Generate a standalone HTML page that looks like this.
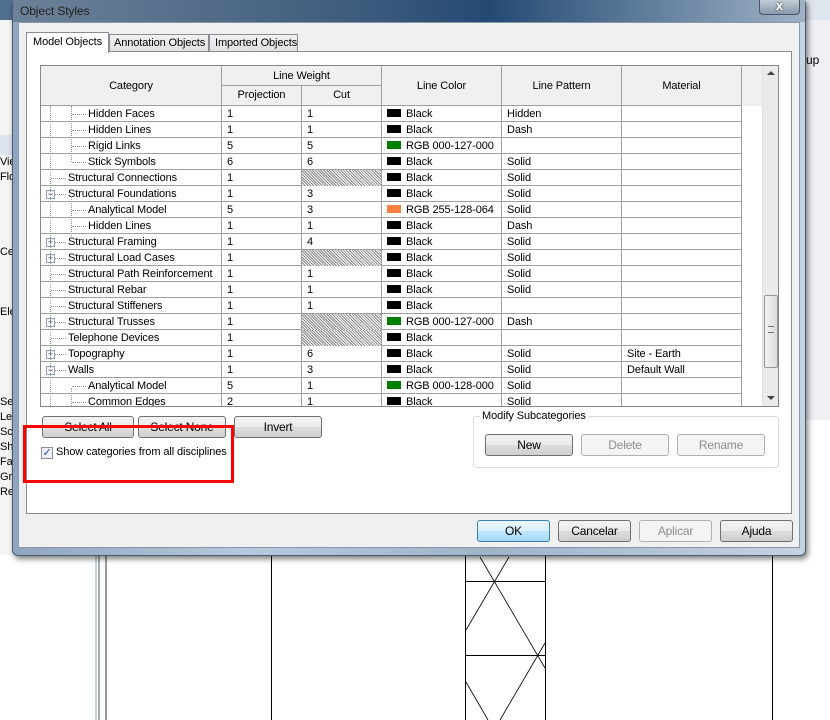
<!DOCTYPE html>
<html><head><meta charset="utf-8"><style>
*{margin:0;padding:0;box-sizing:border-box}
body{width:830px;height:720px;position:relative;overflow:hidden;background:#fff;font-family:"Liberation Sans",sans-serif;font-size:11px;letter-spacing:-0.1px;color:#000}
.a{position:absolute;white-space:nowrap}
.btn{position:absolute;height:22px;border:1px solid #707070;border-radius:3px;background:linear-gradient(#f2f2f2,#ebebeb 50%,#dddddd 51%,#cfcfcf);text-align:center;line-height:20px;font-size:12px;letter-spacing:-0.2px}
.dis{border-color:#adb2b5;color:#8d8d8d;background:#f4f4f4}
.row{position:absolute;left:0;height:16px;width:701px;border-bottom:1px solid #a0a0a0}
.c{position:absolute;top:0;height:16px;line-height:17px;padding-left:5px;border-right:1px solid #a0a0a0;white-space:nowrap;overflow:hidden}
.sw{display:inline-block;width:14px;height:8px;margin-right:5px;vertical-align:0}
.hatch{background:repeating-linear-gradient(45deg,#888 0 1px,#fff 1px 2px)}
.tv{position:absolute;border-left:1px dotted #999}
.th{position:absolute;border-top:1px dotted #999;width:14px}
.pm{position:absolute;width:9px;height:9px;border:1px solid #8a9bb8;background:#fff;font-size:9px;line-height:6px;text-align:center;color:#333}
</style></head><body>
<div class="a" style="left:0;top:0;width:830px;height:555px;background:#dfe5ec"></div>
<div class="a" style="left:0;top:0;width:14px;height:555px;background:#f4f4f4"></div>
<div class="a" style="left:0;top:0;width:14px;height:20px;background:#4f6f8f"></div>
<div class="a" style="left:0;top:135px;width:14px;height:20px;background:#dbe4ef"></div>
<div class="a" style="left:0;top:155px;font-size:11px;line-height:15px;width:14px;overflow:hidden;white-space:normal">Vie<br>Flo<br><br><br><br><br>Ce<br><br><br><br>Ele<br><br><br><br><br><br>Se<br>Leg<br>Sch<br>She<br>Fan<br>Gro<br>Re</div>
<div class="a" style="left:806px;top:20px;width:24px;height:400px;background:#eef0f3"></div>
<div class="a" style="left:806px;top:53px;font-size:12px">up</div>
<div class="a" style="left:806px;top:420px;width:24px;height:140px;background:#fff"></div>
<div class="a" style="left:0;top:555px;width:830px;height:165px;background:#fff"></div>
<svg class="a" style="left:0;top:540px" width="830" height="180">
<line x1="96" y1="0" x2="96" y2="180" stroke="#c8d4e2" stroke-width="2"/>
<line x1="99" y1="0" x2="99" y2="180" stroke="#555" stroke-width="1"/>
<line x1="106" y1="0" x2="106" y2="180" stroke="#333" stroke-width="1"/>
<line x1="271.5" y1="0" x2="271.5" y2="180" stroke="#000"/>
<line x1="465.5" y1="0" x2="465.5" y2="180" stroke="#000"/>
<line x1="545.5" y1="0" x2="545.5" y2="180" stroke="#000"/>
<line x1="772.5" y1="0" x2="772.5" y2="180" stroke="#000"/>
<line x1="465" y1="41.5" x2="545" y2="41.5" stroke="#000"/>
<line x1="465" y1="115.5" x2="545" y2="115.5" stroke="#000"/>
<line x1="480" y1="17" x2="545" y2="128" stroke="#000" stroke-width=".8"/>
<line x1="509" y1="17" x2="466" y2="90" stroke="#000" stroke-width=".8"/>
<line x1="545" y1="103" x2="500" y2="180" stroke="#000" stroke-width=".8"/>
<line x1="466" y1="142" x2="488" y2="180" stroke="#000" stroke-width=".8"/>
</svg>
<div class="a" style="left:12px;top:-2px;width:794px;height:558px;border:1px solid #4a5b70;border-radius:6px;background:linear-gradient(90deg,#8ea6bf,#b7c9dc 30%,#9fb3c8 60%,#c5d3e2);box-shadow:2px 3px 6px rgba(0,0,0,.5)"></div>
<div class="a" style="left:13px;top:0;width:792px;height:22px;background:linear-gradient(90deg,#6d8298,#3c5a7c 45%,#244a72 60%,#6f8aa6 85%,#9fb2c6)"></div>
<div class="a" style="left:20px;top:4px;font-size:12px;color:#222">Object Styles</div>
<div class="a" style="left:759px;top:-2px;width:41px;height:17px;border:1px solid #4a5565;border-radius:0 0 4px 4px;background:linear-gradient(#c7d0da,#8999ab);color:#fff;font-weight:bold;text-align:center;line-height:14px;font-size:13px;text-shadow:0 0 2px #333">x</div>
<div class="a" style="left:18px;top:22px;width:782px;height:526px;background:#f0f0f0;border:1px solid #8a99aa"></div>
<div class="a" style="left:26px;top:51px;width:766px;height:463px;border:1px solid #898c95;background:#fff"></div>
<div class="a" style="left:26px;top:32px;width:83px;height:21px;border:1px solid #898c95;border-bottom:none;background:#fff;line-height:19px;padding-left:6px">Model Objects</div>
<div class="a" style="left:109px;top:34px;width:100px;height:18px;border:1px solid #898c95;background:linear-gradient(#f2f2f2,#e0e0e0);line-height:17px;padding-left:4px">Annotation Objects</div>
<div class="a" style="left:209px;top:34px;width:89px;height:18px;border:1px solid #898c95;background:linear-gradient(#f2f2f2,#e0e0e0);line-height:17px;padding-left:5px">Imported Objects</div>
<div class="a" style="left:40px;top:65px;width:739px;height:342px;border:1px solid #828790;background:#fff;overflow:hidden">
 <div class="a" style="left:0;top:0;width:701px;height:40px;background:#f0f0f0;border-bottom:1px solid #a0a0a0"></div>
 <div class="a" style="left:0;top:0;width:181px;height:40px;border-right:1px solid #a0a0a0;text-align:center;line-height:40px">Category</div>
 <div class="a" style="left:181px;top:0;width:160px;height:20px;border-right:1px solid #a0a0a0;border-bottom:1px solid #a0a0a0;text-align:center;line-height:20px">Line Weight</div>
 <div class="a" style="left:181px;top:20px;width:80px;height:20px;border-right:1px solid #a0a0a0;text-align:center;line-height:19px">Projection</div>
 <div class="a" style="left:261px;top:20px;width:80px;height:20px;border-right:1px solid #a0a0a0;text-align:center;line-height:19px">Cut</div>
 <div class="a" style="left:341px;top:0;width:120px;height:40px;border-right:1px solid #a0a0a0;text-align:center;line-height:40px">Line Color</div>
 <div class="a" style="left:461px;top:0;width:120px;height:40px;border-right:1px solid #a0a0a0;text-align:center;line-height:40px">Line Pattern</div>
 <div class="a" style="left:581px;top:0;width:120px;height:40px;border-right:1px solid #a0a0a0;text-align:center;line-height:40px">Material</div>
 <div class="a" style="left:701px;top:0;width:20px;height:40px;background:#f0f0f0"></div>
 <div id="rows" class="a" style="left:0;top:40px;width:701px;height:300px"></div>
 <div class="tv" style="left:9px;top:40px;height:300px"></div>
 <div class="a" style="left:721px;top:0;width:17px;height:340px;background:#eaeaea;border-left:1px solid #e0e0e0"></div>
 <div class="a" style="left:726px;top:5px;width:0;height:0;border-left:4px solid transparent;border-right:4px solid transparent;border-bottom:4px solid #444"></div>
 <div class="a" style="left:726px;top:330px;width:0;height:0;border-left:4px solid transparent;border-right:4px solid transparent;border-top:4px solid #444"></div>
 <div class="a" style="left:723px;top:229px;width:14px;height:73px;border:1px solid #979797;border-radius:2px;background:linear-gradient(90deg,#f3f3f3,#dcdcdc)"></div>
 <div class="a" style="left:727px;top:260px;width:6px;height:7px;border-top:1px solid #777;border-bottom:1px solid #777"></div>
</div>
<div class="btn" style="left:42px;top:416px;width:92px">Select All</div>
<div class="btn" style="left:138px;top:416px;width:88px">Select None</div>
<div class="btn" style="left:234px;top:416px;width:88px">Invert</div>
<div class="a" style="left:41px;top:447px;width:12px;height:12px;border:1px solid #8f8f8f;background:#eef;color:#2a4a9a;font-size:11px;line-height:10px;text-align:center">✓</div>
<div class="a" style="left:56px;top:446px">Show categories from all disciplines</div>
<div class="a" style="left:23px;top:425px;width:211px;height:58px;border:3px solid #f00"></div>
<div class="a" style="left:473px;top:416px;width:306px;height:52px;border:1px solid #d5dfe5;border-radius:3px"></div>
<div class="a" style="left:480px;top:410px;background:#fff;padding:0 2px">Modify Subcategories</div>
<div class="btn" style="left:485px;top:434px;width:88px">New</div>
<div class="btn dis" style="left:581px;top:434px;width:88px">Delete</div>
<div class="btn dis" style="left:677px;top:434px;width:88px">Rename</div>
<div class="btn" style="left:477px;top:520px;width:73px;border-color:#3c7fb1;background:linear-gradient(#eaf6fd,#d9f0fc 50%,#bee6fd 51%,#a7d9f5)">OK</div>
<div class="btn" style="left:558px;top:520px;width:73px">Cancelar</div>
<div class="btn dis" style="left:639px;top:520px;width:73px">Aplicar</div>
<div class="btn" style="left:720px;top:520px;width:73px">Ajuda</div>
<script>
var R=[
[2,'Hidden Faces','1','1','#000','Black','Hidden','',0],
[2,'Hidden Lines','1','1','#000','Black','Dash','',0],
[2,'Rigid Links','5','5','#008000','RGB 000-127-000','','',0],
[2,'Stick Symbols','6','6','#000','Black','Solid','',0],
[1,'Structural Connections','1','H','#000','Black','Solid','',0],
[1,'Structural Foundations','1','3','#000','Black','Solid','','-'],
[2,'Analytical Model','5','3','#ff8040','RGB 255-128-064','Solid','',0],
[2,'Hidden Lines','1','1','#000','Black','Dash','',0],
[1,'Structural Framing','1','4','#000','Black','Solid','','+'],
[1,'Structural Load Cases','1','H','#000','Black','Solid','','+'],
[1,'Structural Path Reinforcement','1','1','#000','Black','Solid','',0],
[1,'Structural Rebar','1','1','#000','Black','Solid','',0],
[1,'Structural Stiffeners','1','1','#000','Black','','',0],
[1,'Structural Trusses','1','H','#008000','RGB 000-127-000','Dash','','+'],
[1,'Telephone Devices','1','H','#000','Black','','',0],
[1,'Topography','1','6','#000','Black','Solid','Site - Earth','+'],
[1,'Walls','1','3','#000','Black','Solid','Default Wall','-'],
[2,'Analytical Model','5','1','#008000','RGB 000-128-000','Solid','',0],
[2,'Common Edges','2','1','#000','Black','Solid','',0]];
var h='';
R.forEach(function(r,i){
 var y=i*16;
 var ind=r[0]==2?47:27;
 h+='<div class="row" style="top:'+y+'px">';
 h+='<div class="c" style="left:0;width:181px;padding-left:'+ind+'px">'+r[1]+'</div>';
 h+='<div class="c" style="left:181px;width:80px">'+r[2]+'</div>';
 h+=r[3]=='H'?'<div class="c hatch" style="left:261px;width:80px"></div>':'<div class="c" style="left:261px;width:80px">'+r[3]+'</div>';
 h+='<div class="c" style="left:341px;width:120px"><span class="sw" style="background:'+r[4]+'"></span>'+r[5]+'</div>';
 h+='<div class="c" style="left:461px;width:120px">'+r[6]+'</div>';
 h+='<div class="c" style="left:581px;width:120px">'+r[7]+'</div>';
 h+='</div>';
 if(r[0]==2){h+='<div class="th" style="left:31px;top:'+(y+8)+'px;width:14px"></div>';}
 else{h+='<div class="th" style="left:10px;top:'+(y+8)+'px;width:15px"></div>';}
 if(r[8])h+='<div class="pm" style="left:5px;top:'+(y+4)+'px">'+(r[8]=='-'?'−':'+')+'</div>';
});
h+='<div class="tv" style="left:30px;top:0;height:56px"></div>';
h+='<div class="tv" style="left:30px;top:90px;height:40px"></div>';
h+='<div class="tv" style="left:30px;top:282px;height:40px"></div>';
document.getElementById('rows').innerHTML=h;
</script>
</body></html>
